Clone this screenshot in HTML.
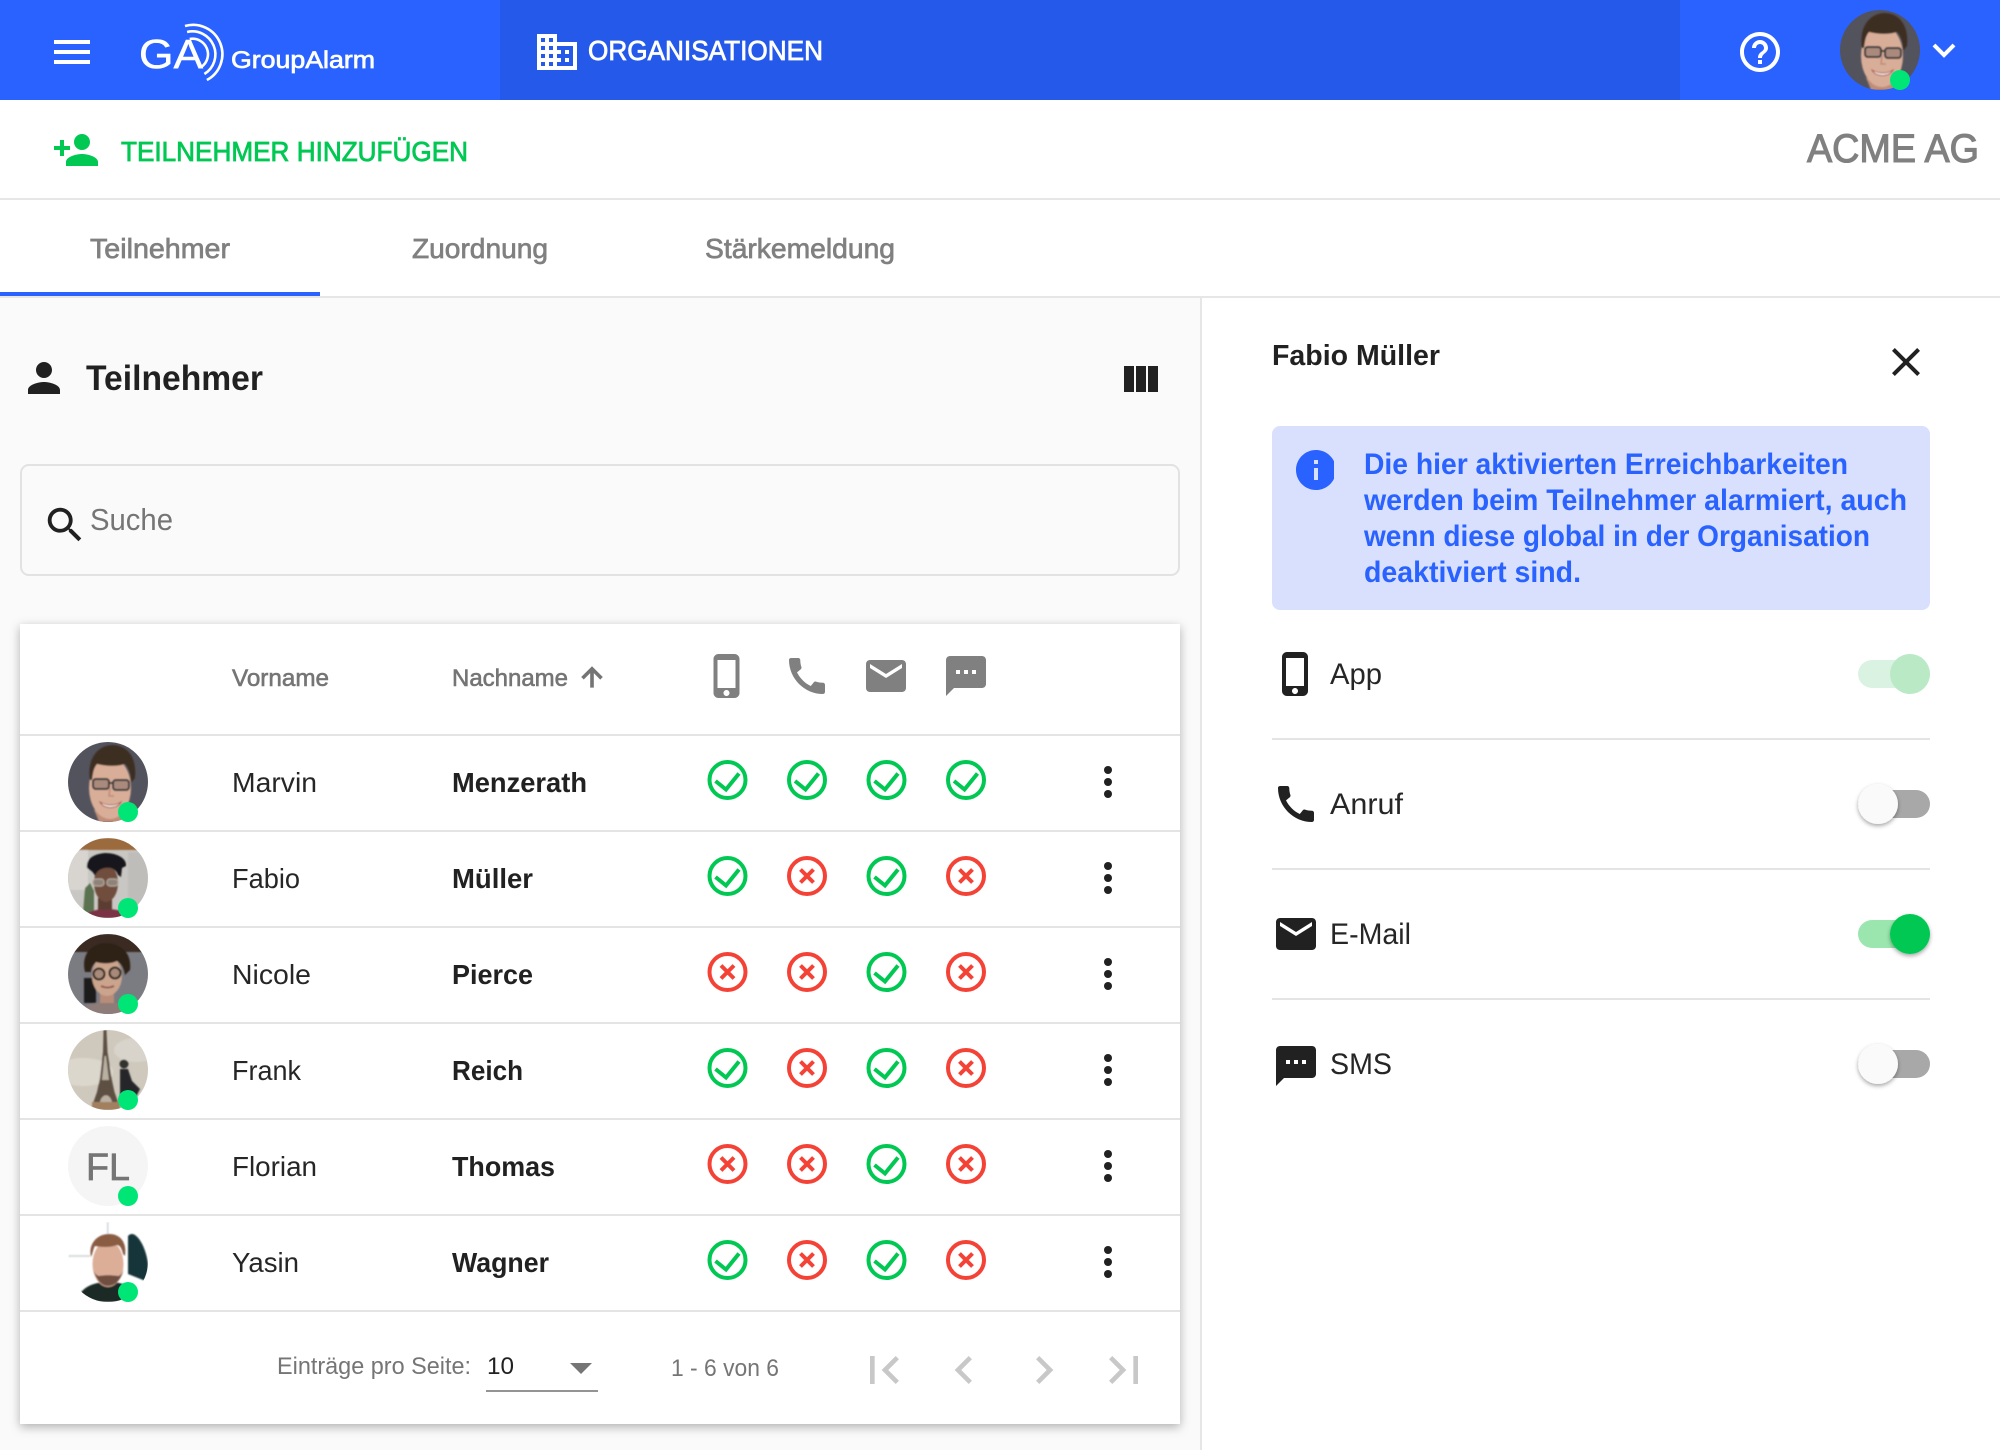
<!DOCTYPE html>
<html lang="de"><head><meta charset="utf-8"><title>GroupAlarm – Teilnehmer</title>
<style>html,body{margin:0;padding:0;background:#fff;width:2000px;height:1450px;overflow:hidden}svg{display:block}text{font-family:"Liberation Sans",sans-serif}</style></head>
<body>
<svg xmlns="http://www.w3.org/2000/svg" width="2000" height="1450" viewBox="0 0 2000 1450">
<defs>
<filter id="card" x="-5%" y="-5%" width="110%" height="110%"><feDropShadow dx="0" dy="3" stdDeviation="5" flood-color="#000" flood-opacity=".3"/></filter>
<filter id="th" x="-40%" y="-40%" width="180%" height="180%"><feDropShadow dx="0" dy="2" stdDeviation="2" flood-color="#000" flood-opacity=".35"/></filter>
<filter id="soft" x="-5%" y="-5%" width="110%" height="110%"><feGaussianBlur stdDeviation=".7"/></filter>
<symbol id="phone" viewBox="0 0 24 24"><path d="M15.5 1h-8C6.12 1 5 2.12 5 3.5v17C5 21.88 6.12 23 7.5 23h8c1.38 0 2.5-1.12 2.5-2.5v-17C18 2.12 16.88 1 15.5 1zm-4 21c-.83 0-1.5-.67-1.5-1.5s.67-1.5 1.5-1.5 1.5.67 1.5 1.5-.67 1.5-1.5 1.5zm4.5-4H7V4h9v14z"/></symbol>
<symbol id="call" viewBox="0 0 24 24"><path d="M20.01 15.38c-1.23 0-2.42-.2-3.53-.56-.35-.12-.74-.03-1.01.24l-1.57 1.97c-2.83-1.35-5.48-3.9-6.89-6.83l1.95-1.66c.27-.28.35-.67.24-1.02-.37-1.11-.56-2.3-.56-3.53 0-.54-.45-.99-.99-.99H4.19C3.65 3 3 3.24 3 3.99 3 13.28 10.73 21 20.01 21c.71 0 .99-.63.99-1.18v-3.45c0-.54-.45-.99-.99-.99z"/></symbol>
<symbol id="mail" viewBox="0 0 24 24"><path d="M20 4H4c-1.1 0-1.99.9-1.99 2L2 18c0 1.1.9 2 2 2h16c1.1 0 2-.9 2-2V6c0-1.1-.9-2-2-2zm0 4l-8 5-8-5V6l8 5 8-5v2z"/></symbol>
<symbol id="sms" viewBox="0 0 24 24"><path d="M20 2H4c-1.1 0-1.99.9-1.99 2L2 22l4-4h14c1.1 0 2-.9 2-2V4c0-1.1-.9-2-2-2zM9 11H7V9h2v2zm4 0h-2V9h2v2zm4 0h-2V9h2v2z"/></symbol>
<symbol id="ok" viewBox="0 0 44 44"><circle cx="22" cy="22" r="18" fill="none" stroke="#00c853" stroke-width="4"/><path d="M10 23l10.500 8.500L33.500 15.500" fill="none" stroke="#00c853" stroke-width="4"/></symbol>
<symbol id="no" viewBox="0 0 44 44"><circle cx="22" cy="22" r="18" fill="none" stroke="#f44336" stroke-width="4"/><path d="M15.500 15.500l13 13M28.500 15.500l-13 13" fill="none" stroke="#f44336" stroke-width="4"/></symbol>
<symbol id="more" viewBox="0 0 8 32"><circle cx="4" cy="4" r="4"/><circle cx="4" cy="16" r="4"/><circle cx="4" cy="28" r="4"/></symbol>
<clipPath id="av"><circle cx="40" cy="40" r="40"/></clipPath>
<symbol id="marvin" viewBox="0 0 80 80"><g clip-path="url(#av)"><rect width="80" height="80" fill="#53535d"/><g filter="url(#soft)"><path d="M26 68c3 6 5 12 5 12h26l-5-14z" fill="#c08d78"/><ellipse cx="42" cy="46" rx="21" ry="31" fill="#d9ae98"/><path d="M22 38c-3-18 5-34 22-35 16 0 25 13 23 33l-4 5c0-8-2-15-6-19-9 3-20 2-28 0-4 5-4 10-5 16z" fill="#3d2d22"/><g fill="#a98a7c" stroke="#35353a" stroke-width="2"><rect x="25" y="37" width="16" height="10" rx="3"/><rect x="45" y="38" width="16" height="10" rx="3"/></g><path d="M41 41h4" stroke="#35353a" stroke-width="2"/><path d="M42 46l-1 8h5" stroke="#bd8c78" stroke-width="1.500" fill="none"/><path d="M32 60c7 4 15 4 21 0-3 7-17 8-21 0z" fill="#f4ece6" stroke="#a9584f" stroke-width="1"/></g></g></symbol>
<symbol id="fabio" viewBox="0 0 80 80"><g clip-path="url(#av)"><rect width="80" height="80" fill="#c9c7c3"/><g filter="url(#soft)"><rect width="80" height="12" fill="#9b6b3d"/><rect x="0" y="12" width="20" height="40" fill="#d8d5d0"/><rect x="60" y="14" width="20" height="55" fill="#bfbdb9"/><path d="M17 50l5-5 4 8v22H15z" fill="#5a7250"/><path d="M16 80c1-6 12-9 23-9s20 3 23 9z" fill="#7b3245"/><rect x="30" y="60" width="14" height="12" fill="#5b3d30"/><ellipse cx="38" cy="45" rx="12" ry="19" fill="#6f4d3c"/><path d="M19 30c-1-9 6-14 18-15 13 0 22 6 21 13l-4 2-1 9-3-2c-2-6-7-8-13-7-5 1-8 3-10 8-1-3-3-5-8-8z" fill="#19191c"/><g fill="#8f8279" stroke="#b4a89e" stroke-width="1.200"><rect x="25" y="41" width="11" height="7" rx="3"/><rect x="39" y="41" width="11" height="7" rx="3"/></g></g></g></symbol>
<symbol id="nicole" viewBox="0 0 80 80"><g clip-path="url(#av)"><rect width="80" height="80" fill="#7b7b82"/><g filter="url(#soft)"><rect width="80" height="18" fill="#3a2b22"/><rect x="16" y="44" width="12" height="25" fill="#1c1c1e"/><path d="M14 80c1-9 14-12 26-12s24 3 25 12z" fill="#8e7b79"/><rect x="32" y="58" width="14" height="11" fill="#b88c78"/><ellipse cx="39" cy="42" rx="15" ry="20" fill="#cba48d"/><path d="M17 38C13 22 22 9 38 9c17 0 26 12 24 27l-5 5c-1-7-4-12-8-14-6 3-15 3-21 1-3 3-5 6-5 10z" fill="#2f2119"/><circle cx="31" cy="40" r="5.500" fill="#a88a7a" stroke="#231a16" stroke-width="2"/><circle cx="47" cy="39" r="5.500" fill="#a88a7a" stroke="#231a16" stroke-width="2"/><path d="M33 52c4 2 9 2 13 0" stroke="#93524d" stroke-width="2" fill="none"/></g></g></symbol>
<symbol id="frank" viewBox="0 0 80 80"><g clip-path="url(#av)"><rect width="80" height="80" fill="#cfc9bd"/><g filter="url(#soft)"><ellipse cx="15" cy="42" rx="30" ry="14" fill="#dcd7cd"/><ellipse cx="68" cy="20" rx="22" ry="12" fill="#d8d4cb"/><path d="M35.500 0h3l1 22 4 26 3 14 6 17H23l6-17 3-14 3-26z" fill="#5d5043"/><path d="M36.500 26h1.500l3 24H34zM32 72c2-9 10-9 12 0z" fill="#b9b0a2"/><rect x="24" y="72" width="28" height="8" fill="#a2805f"/><circle cx="56" cy="34" r="4.500" fill="#33302d"/><path d="M52 39h8l4 12 8 8-6 12H52z" fill="#25262a"/></g></g></symbol>
<symbol id="yasin" viewBox="0 0 80 80"><g clip-path="url(#av)"><rect width="80" height="80" fill="#fff"/><g filter="url(#soft)"><rect x="39" y="0" width="1.500" height="12" fill="#cfd6dc"/><rect x="0" y="33" width="22" height="2" fill="#d9dcdc"/><path d="M60 14c7-8 18 10 20 28v18l-20-8z" fill="#12363a"/><path d="M8 80c4-14 16-20 32-20s24 4 28 20z" fill="#1a2c28"/><ellipse cx="40" cy="42" rx="15.500" ry="23" fill="#dcae98"/><path d="M25 46c2 9 7 18 15 18s14-8 16-18c-1 5-4 8-6 8-6-1-14-1-19 0-3-1-5-3-6-8z" fill="#705040"/><path d="M23 35c-3-13 6-23 18-23 12 0 18 9 16 22l-2-2c-1-5-3-9-6-9-8 3-16 2-22 1-2 3-2 7-4 11z" fill="#8a5c43"/></g></g></symbol>
</defs>

<!-- page backgrounds -->
<rect x="0" y="0" width="2000" height="1450" fill="#fff"/>
<rect x="0" y="298" width="1200" height="1152" fill="#fafafa"/>
<rect x="1200" y="298" width="2" height="1152" fill="#e6e6e6"/>

<!-- app bar -->
<rect x="0" y="0" width="2000" height="100" fill="#2962ff"/>
<rect x="500" y="0" width="1180" height="100" fill="#2559e9"/>
<path d="M54 40h36v4H54zM54 50h36v4H54zM54 60h36v4H54z" fill="#fff"/>
<text x="139" y="68" font-size="41" fill="#fff" stroke="#fff" stroke-width=".5" textLength="64" lengthAdjust="spacingAndGlyphs">GA</text>
<g fill="none" stroke="#fff" stroke-width="2.600"><path d="M185 26A29.300 29.300 0 0 1 206.900 80"/><path d="M187.100 32A23 23 0 0 1 204.400 74"/><path d="M189.700 39A15.500 15.500 0 0 1 201.300 67"/></g>
<text x="231" y="68" font-size="24" fill="#fff" stroke="#fff" stroke-width=".7" textLength="144" lengthAdjust="spacingAndGlyphs">GroupAlarm</text>
<svg x="533" y="28" width="48" height="48" viewBox="0 0 24 24" fill="#fff"><path d="M12 7V3H2v18h20V7H12zM6 19H4v-2h2v2zm0-4H4v-2h2v2zm0-4H4V9h2v2zm0-4H4V5h2v2zm4 12H8v-2h2v2zm0-4H8v-2h2v2zm0-4H8V9h2v2zm0-4H8V5h2v2zm10 12h-8v-2h2v-2h-2v-2h2v-2h-2V9h8v10zm-2-8h-2v2h2v-2zm0 4h-2v2h2v-2z"/></svg>
<text x="588" y="60" font-size="28" fill="#fff" stroke="#fff" stroke-width=".8" textLength="235" lengthAdjust="spacingAndGlyphs">ORGANISATIONEN</text>
<svg x="1736" y="28" width="48" height="48" viewBox="0 0 24 24" fill="#fff"><path d="M11 18h2v-2h-2v2zm1-16C6.480 2 2 6.480 2 12s4.480 10 10 10 10-4.480 10-10S17.520 2 12 2zm0 18c-4.410 0-8-3.590-8-8s3.590-8 8-8 8 3.590 8 8-3.590 8-8 8zm0-14c-2.210 0-4 1.790-4 4h2c0-1.100.9-2 2-2s2 .9 2 2c0 2-3 1.750-3 5h2c0-2.250 3-2.500 3-5 0-2.210-1.790-4-4-4z"/></svg>
<use href="#marvin" x="1840" y="10" width="80" height="80"/>
<circle cx="1900" cy="80" r="10" fill="#00e676"/>
<path d="M1934 45l10 10 10-10" fill="none" stroke="#fff" stroke-width="4"/>

<!-- toolbar -->
<svg x="52" y="126" width="48" height="48" viewBox="0 0 24 24" fill="#00c853"><path d="M15 12c2.210 0 4-1.790 4-4s-1.790-4-4-4-4 1.790-4 4 1.790 4 4 4zm-9-2V7H4v3H1v2h3v3h2v-3h3v-2H6zm9 4c-2.670 0-8 1.340-8 4v2h16v-2c0-2.660-5.330-4-8-4z"/></svg>
<text x="121" y="161" font-size="28" fill="#00c853" stroke="#00c853" stroke-width=".8" textLength="347" lengthAdjust="spacingAndGlyphs">TEILNEHMER HINZUFÜGEN</text>
<text x="1807" y="162" font-size="40" fill="#808080" stroke="#808080" stroke-width="1.100" textLength="172" lengthAdjust="spacingAndGlyphs">ACME AG</text>
<rect x="0" y="198" width="2000" height="2" fill="#e6e6e6"/>

<!-- tabs -->
<g font-size="28" fill="#808080" stroke="#808080" stroke-width=".7">
<text x="90" y="258" textLength="140" lengthAdjust="spacingAndGlyphs">Teilnehmer</text>
<text x="412" y="258" textLength="136" lengthAdjust="spacingAndGlyphs">Zuordnung</text>
<text x="705" y="258" textLength="190" lengthAdjust="spacingAndGlyphs">Stärkemeldung</text>
</g>
<rect x="0" y="296" width="2000" height="2" fill="#e6e6e6"/>
<rect x="0" y="292" width="320" height="4" fill="#2962ff"/>

<!-- list heading -->
<svg x="20" y="354" width="48" height="48" viewBox="0 0 24 24" fill="#212121"><path d="M12 12c2.210 0 4-1.790 4-4s-1.790-4-4-4-4 1.790-4 4 1.790 4 4 4zm0 2c-2.670 0-8 1.340-8 4v2h16v-2c0-2.660-5.330-4-8-4z"/></svg>
<text x="86" y="390" font-size="35" font-weight="bold" fill="#212121" textLength="177" lengthAdjust="spacingAndGlyphs">Teilnehmer</text>
<svg x="1116" y="356" width="48" height="48" viewBox="0 0 24 24" fill="#212121"><path d="M10 18h5V5h-5v13zm-6 0h5V5H4v13zM16 5v13h5V5h-5z"/></svg>

<!-- search -->
<rect x="21" y="465" width="1158" height="110" rx="8" fill="#fafafa" stroke="#e2e2e2" stroke-width="2"/>
<svg x="42" y="502" width="46" height="46" viewBox="0 0 24 24" fill="#212121"><path d="M15.500 14h-.79l-.28-.27C15.410 12.590 16 11.110 16 9.500 16 5.910 13.090 3 9.500 3S3 5.910 3 9.500 5.910 16 9.500 16c1.610 0 3.090-.59 4.230-1.570l.27.28v.79l5 4.990L20.490 19l-4.990-5zm-6 0C7.010 14 5 11.990 5 9.500S7.010 5 9.500 5 14 7.010 14 9.500 11.990 14 9.500 14z"/></svg>
<text x="90" y="530" font-size="31" fill="#757575" textLength="83" lengthAdjust="spacingAndGlyphs">Suche</text>

<!-- table card -->
<rect x="20" y="624" width="1160" height="800" fill="#fff" filter="url(#card)"/>
<g fill="#e4e4e4"><rect x="20" y="734" width="1160" height="2"/><rect x="20" y="830" width="1160" height="2"/><rect x="20" y="926" width="1160" height="2"/><rect x="20" y="1022" width="1160" height="2"/><rect x="20" y="1118" width="1160" height="2"/><rect x="20" y="1214" width="1160" height="2"/><rect x="20" y="1310" width="1160" height="2"/></g>
<g font-size="24" fill="#757575" stroke="#757575" stroke-width=".6">
<text x="232" y="686" textLength="97" lengthAdjust="spacingAndGlyphs">Vorname</text>
<text x="452" y="686" textLength="116" lengthAdjust="spacingAndGlyphs">Nachname</text>
</g>
<svg x="577" y="662" width="30" height="30" viewBox="0 0 24 24" fill="#757575" stroke="#757575" stroke-width=".9"><path d="M4 12l1.410 1.410L11 7.830V20h2V7.830l5.580 5.590L20 12l-8-8-8 8z"/></svg>
<g fill="#808080">
<use href="#phone" x="703.500" y="652" width="48" height="48"/>
<use href="#call" x="783" y="652" width="48" height="48"/>
<use href="#mail" x="862" y="652" width="48" height="48"/>
<use href="#sms" x="942" y="652" width="48" height="48"/>
</g>

<!-- avatars -->
<use href="#marvin" x="68" y="742" width="80" height="80"/>
<use href="#fabio" x="68" y="838" width="80" height="80"/>
<use href="#nicole" x="68" y="934" width="80" height="80"/>
<use href="#frank" x="68" y="1030" width="80" height="80"/>
<circle cx="108" cy="1166" r="40" fill="#f5f5f5"/>
<text x="86" y="1180" font-size="38" fill="#757575" stroke="#757575" stroke-width=".7" textLength="44" lengthAdjust="spacingAndGlyphs">FL</text>
<use href="#yasin" x="68" y="1222" width="80" height="80"/>
<g fill="#00e676"><circle cx="128" cy="812" r="10"/><circle cx="128" cy="908" r="10"/><circle cx="128" cy="1004" r="10"/><circle cx="128" cy="1100" r="10"/><circle cx="128" cy="1196" r="10"/><circle cx="128" cy="1292" r="10"/></g>

<!-- first names -->
<g font-size="28" fill="#262626">
<text x="232" y="792" textLength="85" lengthAdjust="spacingAndGlyphs">Marvin</text>
<text x="232" y="888" textLength="68" lengthAdjust="spacingAndGlyphs">Fabio</text>
<text x="232" y="984" textLength="79" lengthAdjust="spacingAndGlyphs">Nicole</text>
<text x="232" y="1080" textLength="69" lengthAdjust="spacingAndGlyphs">Frank</text>
<text x="232" y="1176" textLength="85" lengthAdjust="spacingAndGlyphs">Florian</text>
<text x="232" y="1272" textLength="67" lengthAdjust="spacingAndGlyphs">Yasin</text>
</g>
<!-- last names -->
<g font-size="28" font-weight="bold" fill="#212121">
<text x="452" y="792" textLength="135" lengthAdjust="spacingAndGlyphs">Menzerath</text>
<text x="452" y="888" textLength="81" lengthAdjust="spacingAndGlyphs">Müller</text>
<text x="452" y="984" textLength="81" lengthAdjust="spacingAndGlyphs">Pierce</text>
<text x="452" y="1080" textLength="71" lengthAdjust="spacingAndGlyphs">Reich</text>
<text x="452" y="1176" textLength="103" lengthAdjust="spacingAndGlyphs">Thomas</text>
<text x="452" y="1272" textLength="97" lengthAdjust="spacingAndGlyphs">Wagner</text>
</g>

<!-- status icons -->
<use href="#ok" x="705.500" y="758" width="44" height="44"/><use href="#ok" x="785" y="758" width="44" height="44"/><use href="#ok" x="864.500" y="758" width="44" height="44"/><use href="#ok" x="944" y="758" width="44" height="44"/>
<use href="#ok" x="705.500" y="854" width="44" height="44"/><use href="#no" x="785" y="854" width="44" height="44"/><use href="#ok" x="864.500" y="854" width="44" height="44"/><use href="#no" x="944" y="854" width="44" height="44"/>
<use href="#no" x="705.500" y="950" width="44" height="44"/><use href="#no" x="785" y="950" width="44" height="44"/><use href="#ok" x="864.500" y="950" width="44" height="44"/><use href="#no" x="944" y="950" width="44" height="44"/>
<use href="#ok" x="705.500" y="1046" width="44" height="44"/><use href="#no" x="785" y="1046" width="44" height="44"/><use href="#ok" x="864.500" y="1046" width="44" height="44"/><use href="#no" x="944" y="1046" width="44" height="44"/>
<use href="#no" x="705.500" y="1142" width="44" height="44"/><use href="#no" x="785" y="1142" width="44" height="44"/><use href="#ok" x="864.500" y="1142" width="44" height="44"/><use href="#no" x="944" y="1142" width="44" height="44"/>
<use href="#ok" x="705.500" y="1238" width="44" height="44"/><use href="#no" x="785" y="1238" width="44" height="44"/><use href="#ok" x="864.500" y="1238" width="44" height="44"/><use href="#no" x="944" y="1238" width="44" height="44"/>
<g fill="#212121">
<use href="#more" x="1104" y="766" width="8" height="32"/><use href="#more" x="1104" y="862" width="8" height="32"/><use href="#more" x="1104" y="958" width="8" height="32"/><use href="#more" x="1104" y="1054" width="8" height="32"/><use href="#more" x="1104" y="1150" width="8" height="32"/><use href="#more" x="1104" y="1246" width="8" height="32"/>
</g>

<!-- pagination -->
<text x="277" y="1374" font-size="24" fill="#757575" textLength="194" lengthAdjust="spacingAndGlyphs">Einträge pro Seite:</text>
<text x="487" y="1374" font-size="24" fill="#212121" textLength="27" lengthAdjust="spacingAndGlyphs">10</text>
<path d="M570 1363h22l-11 11z" fill="#757575"/>
<rect x="486" y="1390" width="112" height="2" fill="#949494"/>
<text x="671" y="1376" font-size="24" fill="#757575" textLength="108" lengthAdjust="spacingAndGlyphs">1 - 6 von 6</text>
<g fill="#c8c8c8">
<svg x="856" y="1342" width="56" height="56" viewBox="0 0 24 24"><path d="M18.410 16.590L13.820 12l4.590-4.590L17 6l-6 6 6 6zM6 6h2v12H6z"/></svg>
<svg x="936" y="1342" width="56" height="56" viewBox="0 0 24 24"><path d="M15.410 7.410L14 6l-6 6 6 6 1.410-1.410L10.830 12z"/></svg>
<svg x="1016" y="1342" width="56" height="56" viewBox="0 0 24 24"><path d="M10 6L8.590 7.410 13.170 12l-4.580 4.590L10 18l6-6z"/></svg>
<svg x="1096" y="1342" width="56" height="56" viewBox="0 0 24 24"><path d="M5.590 7.410L10.180 12l-4.590 4.590L7 18l6-6-6-6zM16 6h2v12h-2z"/></svg>
</g>

<!-- detail panel -->
<text x="1272" y="365" font-size="29" font-weight="bold" fill="#212121" textLength="168" lengthAdjust="spacingAndGlyphs">Fabio Müller</text>
<svg x="1882" y="338" width="48" height="48" viewBox="0 0 24 24" fill="#212121"><path d="M19 6.410L17.590 5 12 10.590 6.410 5 5 6.410 10.590 12 5 17.590 6.410 19 12 13.410 17.590 19 19 17.590 13.410 12z"/></svg>
<rect x="1272" y="426" width="658" height="184" rx="8" fill="#d9e0fd"/>
<svg x="1292" y="446" width="42" height="48" viewBox="0 0 21 24" fill="#2962ff"><path d="M12 2C6.480 2 2 6.480 2 12s4.480 10 10 10 10-4.480 10-10S17.520 2 12 2zm1 15h-2v-6h2v6zm0-8h-2V7h2v2z"/></svg>
<g font-size="30" font-weight="bold" fill="#2962ff">
<text x="1364" y="474" textLength="484" lengthAdjust="spacingAndGlyphs">Die hier aktivierten Erreichbarkeiten</text>
<text x="1364" y="510" textLength="543" lengthAdjust="spacingAndGlyphs">werden beim Teilnehmer alarmiert, auch</text>
<text x="1364" y="546" textLength="506" lengthAdjust="spacingAndGlyphs">wenn diese global in der Organisation</text>
<text x="1364" y="582" textLength="217" lengthAdjust="spacingAndGlyphs">deaktiviert sind.</text>
</g>

<g fill="#212121">
<use href="#phone" x="1272" y="650" width="48" height="48"/>
<use href="#call" x="1272" y="780" width="48" height="48"/>
<use href="#mail" x="1272" y="910" width="48" height="48"/>
<use href="#sms" x="1272" y="1042" width="48" height="48"/>
</g>
<g font-size="30" fill="#262626">
<text x="1330" y="684" textLength="52" lengthAdjust="spacingAndGlyphs">App</text>
<text x="1330" y="814" textLength="73" lengthAdjust="spacingAndGlyphs">Anruf</text>
<text x="1330" y="944" textLength="81" lengthAdjust="spacingAndGlyphs">E-Mail</text>
<text x="1330" y="1074" textLength="62" lengthAdjust="spacingAndGlyphs">SMS</text>
</g>
<g fill="#e4e4e4"><rect x="1272" y="738" width="658" height="2"/><rect x="1272" y="868" width="658" height="2"/><rect x="1272" y="998" width="658" height="2"/></g>

<!-- toggles -->
<rect x="1858" y="660" width="72" height="28" rx="14" fill="#daf2e1"/>
<circle cx="1910" cy="674" r="20" fill="#b9e9c5"/>
<rect x="1858" y="790" width="72" height="28" rx="14" fill="#a8a8a8"/>
<circle cx="1878" cy="804" r="20" fill="#fafafa" filter="url(#th)"/>
<rect x="1858" y="920" width="72" height="28" rx="14" fill="#9ae6ae"/>
<circle cx="1910" cy="934" r="20" fill="#00c853" filter="url(#th)"/>
<rect x="1858" y="1050" width="72" height="28" rx="14" fill="#a8a8a8"/>
<circle cx="1878" cy="1064" r="20" fill="#fafafa" filter="url(#th)"/>
</svg>
</body></html>
